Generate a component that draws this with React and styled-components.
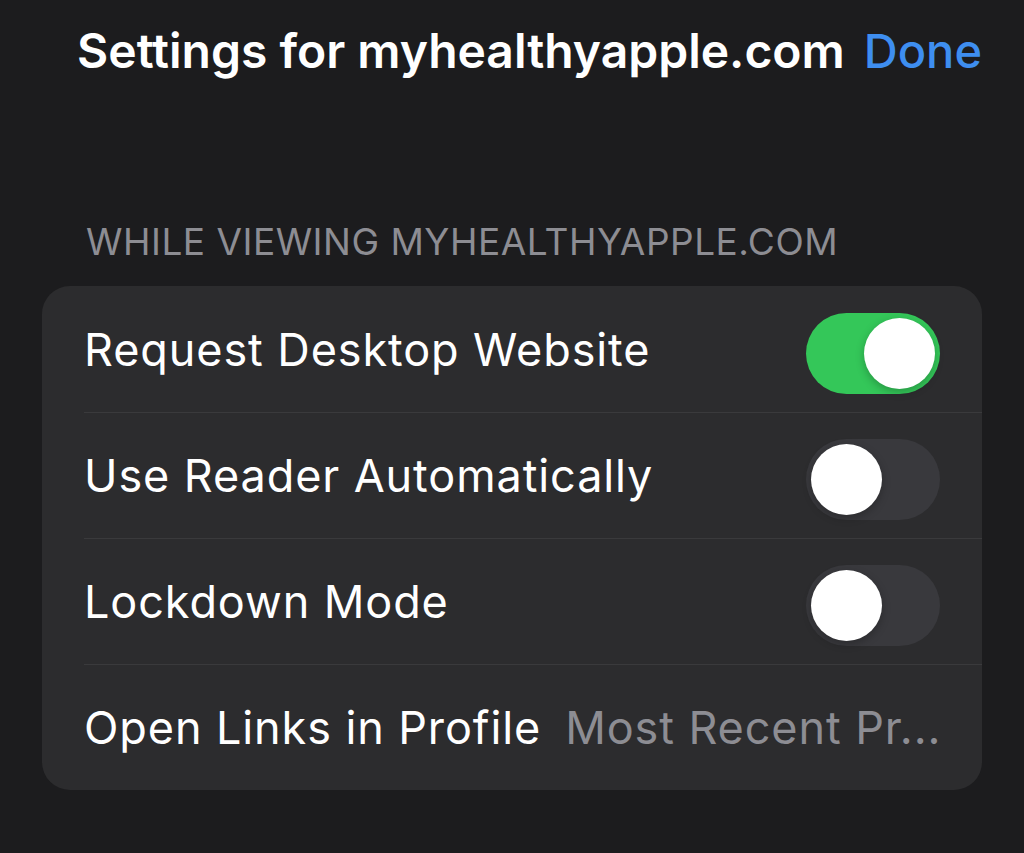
import React, { useState } from 'react'
import styled, { createGlobalStyle } from 'styled-components'

const GlobalStyle = createGlobalStyle`
  html, body {
    margin: 0;
    padding: 0;
    background-color: #1c1c1e;
  }
  body {
    font-family: Inter, "Liberation Sans", sans-serif;
    -webkit-font-smoothing: antialiased;
  }
`

const Screen = styled.div`
  width: 1024px;
  height: 853px;
  background-color: #1c1c1e;
  box-sizing: border-box;
  padding: 0 42px;
  overflow: hidden;
`

const Header = styled.div`
  display: flex;
  align-items: center;
  justify-content: flex-end;
  gap: 19px;
  height: 100px;
`

const Title = styled.div`
  color: #ffffff;
  font-size: 48px;
  font-weight: 600;
  letter-spacing: 0;
`

const DoneButton = styled.button`
  background: none;
  border: none;
  padding: 0;
  color: #3e8ef0;
  font-family: inherit;
  font-size: 47px;
  font-weight: 500;
  cursor: pointer;
`

const SectionLabel = styled.div`
  margin-top: 120px;
  padding-left: 44px;
  color: #8d8d93;
  font-size: 37px;
  letter-spacing: 0.5px;
  line-height: 44px;
  height: 44px;
  margin-bottom: 22px;
`

const Card = styled.div`
  background-color: #2c2c2e;
  border-radius: 28px;
  overflow: hidden;
`

const Row = styled.div`
  display: flex;
  align-items: center;
  justify-content: space-between;
  height: 126px;
  margin-left: 42px;
  padding-right: 42px;
  border-top: ${p => (p.first ? 'none' : '1.5px solid #3a3a3c')};
  box-sizing: border-box;
`

const Label = styled.div`
  color: #ffffff;
  font-size: 45px;
  letter-spacing: 0.9px;
  white-space: nowrap;
`

const Value = styled.div`
  color: #8d8d93;
  font-size: 45px;
  letter-spacing: 0.9px;
  white-space: nowrap;
  margin-left: 24px;
`

const Track = styled.button`
  position: relative;
  width: 134px;
  height: 81px;
  margin-top: 8px;
  border-radius: 41px;
  border: none;
  padding: 0;
  cursor: pointer;
  background-color: ${p => (p.on ? '#34c759' : '#39393d')};
  flex-shrink: 0;
`

const Knob = styled.span`
  position: absolute;
  top: 5px;
  left: ${p => (p.on ? '58px' : '5px')};
  width: 71px;
  height: 71px;
  border-radius: 50%;
  background-color: #ffffff;
  box-shadow: 0 3px 8px rgba(0, 0, 0, 0.25);
  transition: left 0.2s;
`

const Toggle = ({ on, onClick }) => (
  <Track on={on ? 1 : 0} onClick={onClick}>
    <Knob on={on ? 1 : 0} />
  </Track>
)

const App = () => {
  const [settings, setSettings] = useState({
    desktop: true,
    reader: false,
    lockdown: false
  })

  const flip = key => () => setSettings(s => ({ ...s, [key]: !s[key] }))

  return (
    <Screen>
      <GlobalStyle />
      <Header>
        <Title>Settings for myhealthyapple.com</Title>
        <DoneButton>Done</DoneButton>
      </Header>

      <SectionLabel>WHILE VIEWING MYHEALTHYAPPLE.COM</SectionLabel>

      <Card>
        <Row first>
          <Label>Request Desktop Website</Label>
          <Toggle on={settings.desktop} onClick={flip('desktop')} />
        </Row>
        <Row>
          <Label>Use Reader Automatically</Label>
          <Toggle on={settings.reader} onClick={flip('reader')} />
        </Row>
        <Row>
          <Label>Lockdown Mode</Label>
          <Toggle on={settings.lockdown} onClick={flip('lockdown')} />
        </Row>
        <Row>
          <Label>Open Links in Profile</Label>
          <Value>Most Recent Pr...</Value>
        </Row>
      </Card>
    </Screen>
  )
}

export default App
